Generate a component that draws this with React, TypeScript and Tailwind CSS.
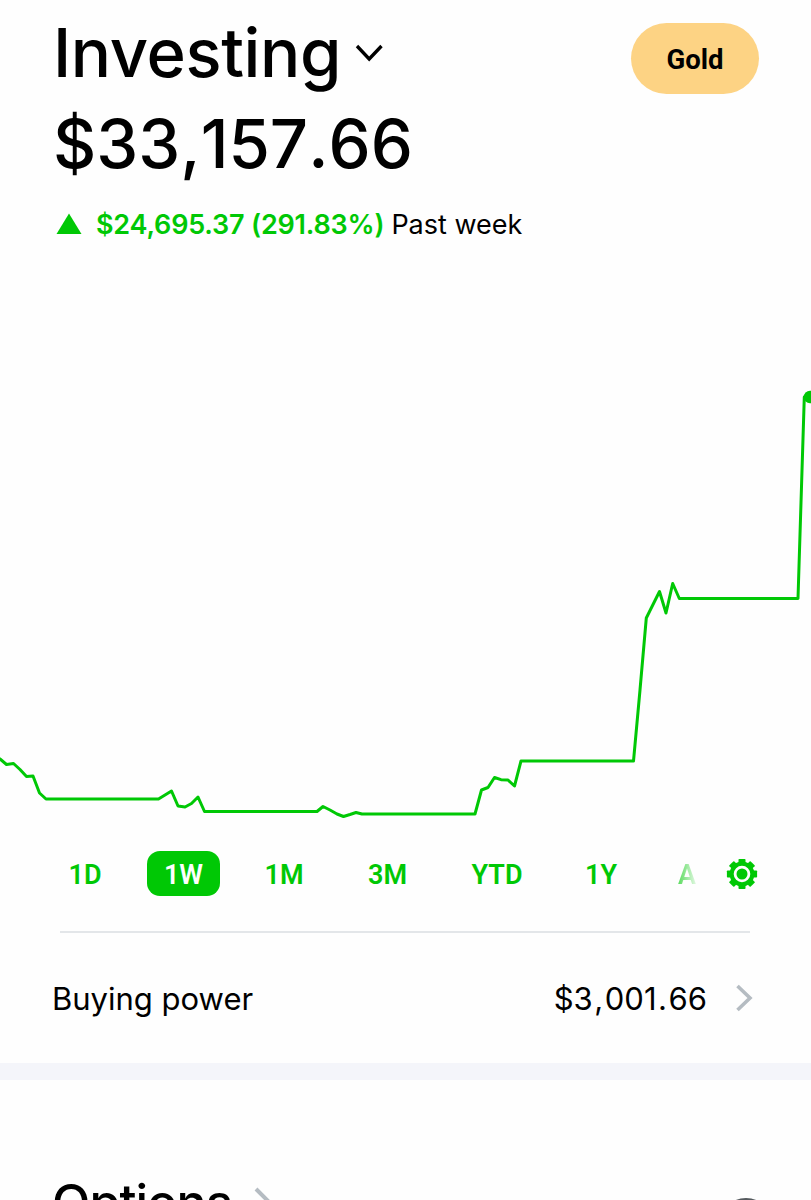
const GREEN = "#00c805";

const ranges = [
  { label: "1D", box: "w-[66px]" },
  { label: "1W", box: "w-[73px]", active: true },
  { label: "1M", box: "w-[70px]" },
  { label: "3M", box: "w-[79px]" },
  { label: "YTD", box: "w-[82px]" },
  { label: "1Y", box: "w-[68px]" },
];

const points =
  "-3,757 0,759 6.5,764.5 13.5,763.5 20,769.5 26.5,776.5 33,776 39.5,793 46,799 158.5,799 171.5,791 178,806 185,807 191.5,803.5 198,797 204.5,811.5 317,811.5 323,806.5 330,810 337,814 343.5,816.5 350,814.5 356,812.5 362,814 475,814 481.5,790 488,787.5 494.5,777.5 501,779.7 508,780 514.5,786 521,761 633.5,761 640,690 646.3,618 659.5,591.5 666,613 672.7,583.5 679.3,598.5 798,598.5 804.3,397 811,397";

function PerformanceChart() {
  return (
    <svg className="block h-[607px] w-full shrink-0" viewBox="0 244 811 607" fill="none">
      <polyline points={points} stroke={GREEN} strokeWidth="3" strokeLinejoin="round" />
      <circle cx="810" cy="397" r="6.2" fill={GREEN} />
    </svg>
  );
}

function Amount({ value, mark }: { value: string; mark: string }) {
  return (
    <span className="[font-kerning:none]">
      {value.split(/([.,])/).map((part, i) =>
        i % 2 ? (
          <span key={i} className={mark}>
            {part}
          </span>
        ) : (
          part
        ),
      )}
    </span>
  );
}

function Gear() {
  const angles = [0, 45, 90, 135];
  return (
    <svg className="h-8 w-8 shrink-0" viewBox="-16 -16 32 32">
      {angles.map((a) => (
        <rect key={a} x="-3.5" y="-15.1" width="7" height="30.2" rx="0.8" fill={GREEN} transform={`rotate(${a})`} />
      ))}
      <circle r="12.4" fill={GREEN} />
      <circle r="6.9" fill={GREEN} stroke="#fefefe" strokeWidth="2.8" />
    </svg>
  );
}

export default function App() {
  return (
    <main className="flex h-[1200px] w-[811px] flex-col overflow-hidden bg-[#fefefe] font-['Inter',sans-serif] text-black">
      <header className="flex h-[93px] shrink-0 items-start justify-between pr-[52px] pl-[53px] pt-[13px]">
        <button className="flex items-start">
          <h1 className="w-[291px] text-left text-[67px] font-medium leading-[80px] tracking-[-0.4px]">Investing</h1>
          <svg className="ml-[10px] mt-[28px] h-[22px] w-[30px]" viewBox="354 41 30 22" fill="none">
            <path d="M357 46 369.2 59 381.5 46" stroke="black" strokeWidth="3.3" />
          </svg>
        </button>
        <button className="mt-[10px] h-[71px] w-[128px] rounded-full bg-[#fdd384] font-['Roboto',sans-serif] text-[27.5px] font-bold leading-[73px]">
          Gold
        </button>
      </header>
      <div className="mt-[11px] h-[80px] shrink-0 pl-[53px] text-[67px] font-medium leading-[80px]">
        <Amount value="$33,157.66" mark="px-0" />
      </div>
      <div className="mt-[21px] flex h-[39px] shrink-0 items-baseline pl-[56px] leading-[40px]">
        <svg className="h-[21px] w-[26px]" viewBox="0 0 26 21">
          <path d="M0.5 21 13 0.5 25.5 21Z" fill={GREEN} />
        </svg>
        <span className="ml-[14px] text-[27px] font-semibold tracking-[-0.2px] text-[#00c805]">
          $24,695.37 (291.83%)
        </span>
        <span className="ml-[7px] text-[27px]">Past week</span>
      </div>
      <PerformanceChart />
      <nav className="flex h-[45px] shrink-0 items-center pl-[52px]">
        <div className="flex w-[648px] shrink-0 gap-[29px] overflow-hidden font-['Roboto',sans-serif] text-[27px] font-semibold leading-[48px] text-[#00c805]">
          {ranges.map((r) => (
            <button
              key={r.label}
              className={`${r.box} h-[45px] shrink-0 rounded-[13px] text-center ${r.active ? "bg-[#00c805] text-[#fefefe]" : ""}`}
            >
              {r.label}
            </button>
          ))}
          <button className="ml-[14px] h-[45px] w-[20px] shrink-0 bg-linear-to-r from-[#00c805]/65 to-[#00c805]/5 bg-clip-text text-left text-transparent">
            A
          </button>
        </div>
        <span className="ml-[26px]">
          <Gear />
        </span>
      </nav>
      <hr className="ml-[60px] mt-[35px] h-[2px] w-[690px] shrink-0 border-0 bg-[#e3e6e9]" />
      <section className="flex h-[130px] shrink-0 items-center pl-[52px] pr-[58px]">
        <span className="pt-[2px] text-[31px] leading-[40px]">Buying power</span>
        <span className="ml-auto pt-[2px] text-[31px] leading-[40px]">
          <Amount value="$3,001.66" mark="px-[0.05em]" />
        </span>
        <svg className="ml-[28px] h-[28px] w-[18px]" viewBox="0 0 18 28" fill="none">
          <path d="M2.5 2 15 14 2.5 26" stroke="#b5bcc2" strokeWidth="3.6" />
        </svg>
      </section>
      <div className="h-[17px] shrink-0 bg-[#f4f5fa]" />
      <section className="flex h-[160px] shrink-0 items-start pl-[52px] pr-[39px] pt-[92px]">
        <h2 className="w-[181px] text-[50px] font-medium leading-[60px] tracking-[-0.9px]">Options</h2>
        <svg className="ml-[21px] mt-[15px] h-[34px] w-[20px]" viewBox="0 0 20 34" fill="none">
          <path d="M2 2 17 17 2 32" stroke="#b5bcc2" strokeWidth="4" />
        </svg>
        <span className="ml-auto mt-[26px] h-[52px] w-[52px] rounded-full border-3 border-[#555a5e]" />
      </section>
    </main>
  );
}
